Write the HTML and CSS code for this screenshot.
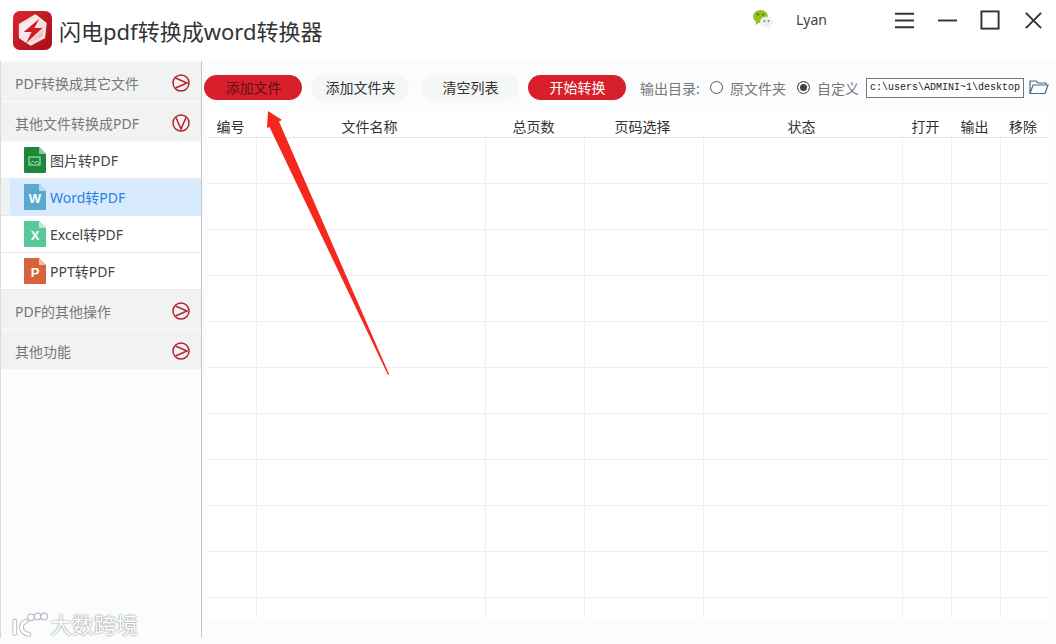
FILE: index.html
```html
<!DOCTYPE html>
<html lang="zh-CN">
<head>
<meta charset="utf-8">
<title>闪电pdf转换成word转换器</title>
<link rel="stylesheet" href="styles.css">
</head>
<body>
<div class="app">
  <header class="titlebar">
    <svg class="logo" viewBox="0 0 40 40">
      <defs>
        <linearGradient id="lg" x1="0" y1="0" x2="1" y2="1"><stop offset="0" stop-color="#dd2530"/><stop offset="1" stop-color="#a50f18"/></linearGradient>
        <linearGradient id="lw" x1="0" y1="0" x2="1" y2="1"><stop offset="0" stop-color="#fff"/><stop offset="0.6" stop-color="#f7dcdd"/><stop offset="1" stop-color="#e58f95"/></linearGradient>
      </defs>
      <rect width="40" height="40" rx="7" fill="url(#lg)"/>
      <path d="M23 5 L33 13 L31.500 27 L18 34 L7.500 27 L7.500 14 Z" fill="url(#lw)" stroke="#f6e4e4" stroke-width="3" stroke-linejoin="round"/>
      <path d="M27 8 L11 21.500 L19 21.500 L13.500 33 L30 17.500 L22 17.500 Z" fill="#cf1c27"/>
    </svg>
    <h1 class="app-title">闪电pdf转换成word转换器</h1>
    <svg class="wechat" viewBox="0 0 22 22">
      <ellipse cx="8.500" cy="8.500" rx="7.500" ry="6.500" fill="#8fc31f"/>
      <path d="M4 13 L3.500 17 L8 14 Z" fill="#8fc31f"/>
      <ellipse cx="14.500" cy="14" rx="6.500" ry="5.500" fill="#f1f1ec"/>
      <path d="M17 18 L18.500 21 L14.500 19 Z" fill="#f1f1ec"/>
      <circle cx="6" cy="6.500" r="1.100" fill="#476b12"/>
      <circle cx="11" cy="6.500" r="1.100" fill="#476b12"/>
      <circle cx="12.500" cy="13" r="0.900" fill="#777"/>
      <circle cx="16.500" cy="13" r="0.900" fill="#777"/>
    </svg>
    <span class="user">Lyan</span>
    <div class="win-controls">
      <svg class="win-icon" viewBox="0 0 22 18"><path d="M1 2H21M1 9H21M1 16H21" stroke="#333" stroke-width="2" fill="none"/></svg>
      <svg class="win-icon" viewBox="0 0 22 18"><path d="M1 9H21" stroke="#333" stroke-width="2" fill="none"/></svg>
      <svg class="win-icon" viewBox="0 0 22 22"><rect x="1.500" y="1.500" width="18" height="18" stroke="#333" stroke-width="2" fill="none"/></svg>
      <svg class="win-icon" viewBox="0 0 22 22"><path d="M3 3L19 19M19 3L3 19" stroke="#333" stroke-width="2" fill="none"/></svg>
    </div>
  </header>

  <div class="workspace">
    <aside class="sidebar">
      <div class="group">
        <span>PDF转换成其它文件</span>
        <svg class="chev" viewBox="0 0 18 18"><circle cx="9" cy="9" r="8" fill="none" stroke="#b5242c" stroke-width="1.500"/><path d="M3.500 4L15 9L3.500 14" fill="none" stroke="#b5242c" stroke-width="1.500"/></svg>
      </div>
      <div class="group">
        <span>其他文件转换成PDF</span>
        <svg class="chev" viewBox="0 0 18 18"><circle cx="9" cy="9" r="8" fill="none" stroke="#b5242c" stroke-width="1.500"/><path d="M4 3.500L9 15L14 3.500" fill="none" stroke="#b5242c" stroke-width="1.500"/></svg>
      </div>
      <div class="item">
        <svg class="file" viewBox="0 0 22 26"><path d="M1 0H15L22 7V25a1 1 0 0 1-1 1H1a1 1 0 0 1-1-1V1a1 1 0 0 1 1-1Z" fill="#1a8a3a"/><path d="M15 0L22 7H15Z" fill="#8cc79b"/><rect x="5" y="10" width="11" height="8" fill="none" stroke="#bfe3c8"/><path d="M6 17L9 14L11 16L13 14L15 17" fill="none" stroke="#bfe3c8" stroke-width="0.800"/></svg>
        <span>图片转PDF</span>
      </div>
      <div class="item selected">
        <svg class="file" viewBox="0 0 22 26"><path d="M1 0H15L22 7V25a1 1 0 0 1-1 1H1a1 1 0 0 1-1-1V1a1 1 0 0 1 1-1Z" fill="#5aa9cc"/><path d="M15 0L22 7H15Z" fill="#bcdcec"/><text x="11" y="19" class="file-letter">W</text></svg>
        <span>Word转PDF</span>
      </div>
      <div class="item">
        <svg class="file" viewBox="0 0 22 26"><path d="M1 0H15L22 7V25a1 1 0 0 1-1 1H1a1 1 0 0 1-1-1V1a1 1 0 0 1 1-1Z" fill="#58c89b"/><path d="M15 0L22 7H15Z" fill="#bde9d6"/><text x="11" y="19" class="file-letter">X</text></svg>
        <span>Excel转PDF</span>
      </div>
      <div class="item">
        <svg class="file" viewBox="0 0 22 26"><path d="M1 0H15L22 7V25a1 1 0 0 1-1 1H1a1 1 0 0 1-1-1V1a1 1 0 0 1 1-1Z" fill="#d9623a"/><path d="M15 0L22 7H15Z" fill="#f0c0ad"/><text x="11" y="19" class="file-letter">P</text></svg>
        <span>PPT转PDF</span>
      </div>
      <div class="group">
        <span>PDF的其他操作</span>
        <svg class="chev" viewBox="0 0 18 18"><circle cx="9" cy="9" r="8" fill="none" stroke="#b5242c" stroke-width="1.500"/><path d="M3.500 4L15 9L3.500 14" fill="none" stroke="#b5242c" stroke-width="1.500"/></svg>
      </div>
      <div class="group">
        <span>其他功能</span>
        <svg class="chev" viewBox="0 0 18 18"><circle cx="9" cy="9" r="8" fill="none" stroke="#b5242c" stroke-width="1.500"/><path d="M3.500 4L15 9L3.500 14" fill="none" stroke="#b5242c" stroke-width="1.500"/></svg>
      </div>
    </aside>

    <main class="content">
      <div class="toolbar">
        <button class="btn primary dark-text">添加文件</button>
        <button class="btn">添加文件夹</button>
        <button class="btn clear">清空列表</button>
        <button class="btn primary start">开始转换</button>
        <span class="out-label">输出目录:</span>
        <label class="radio"><i class="dot"></i>原文件夹</label>
        <label class="radio custom"><i class="dot on"></i>自定义</label>
        <div class="path">c:\users\ADMINI~1\desktop</div>
        <svg class="folder" viewBox="0 0 20 16"><path d="M1 14.500V2H7L9 4H17V6M1 14.500H16L19 6H4L1 14.500Z" fill="none" stroke="#4a6a80" stroke-width="1.200"/></svg>
      </div>
      <div class="table">
        <div class="row head">
          <div>编号</div><div>文件名称</div><div>总页数</div><div>页码选择</div><div>状态</div><div>打开</div><div>输出</div><div>移除</div>
        </div>
        <div class="row"><div></div><div></div><div></div><div></div><div></div><div></div><div></div><div></div></div>
        <div class="row"><div></div><div></div><div></div><div></div><div></div><div></div><div></div><div></div></div>
        <div class="row"><div></div><div></div><div></div><div></div><div></div><div></div><div></div><div></div></div>
        <div class="row"><div></div><div></div><div></div><div></div><div></div><div></div><div></div><div></div></div>
        <div class="row"><div></div><div></div><div></div><div></div><div></div><div></div><div></div><div></div></div>
        <div class="row"><div></div><div></div><div></div><div></div><div></div><div></div><div></div><div></div></div>
        <div class="row"><div></div><div></div><div></div><div></div><div></div><div></div><div></div><div></div></div>
        <div class="row"><div></div><div></div><div></div><div></div><div></div><div></div><div></div><div></div></div>
        <div class="row"><div></div><div></div><div></div><div></div><div></div><div></div><div></div><div></div></div>
        <div class="row"><div></div><div></div><div></div><div></div><div></div><div></div><div></div><div></div></div>
        <div class="row"><div></div><div></div><div></div><div></div><div></div><div></div><div></div><div></div></div>
      </div>
    </main>
  </div>

  <svg class="arrow" viewBox="0 0 130 270"><path d="M4 1 L18 10 L15 11.500 L125 264 L124 265 L5.500 17 L3 18 Z" fill="#f5281e"/></svg>

  <div class="watermark">
    <svg class="wm-logo" viewBox="0 0 40 26"><g fill="none" stroke="#b9bdc2" stroke-width="5" stroke-linecap="round"><path d="M5 10V23"/><path d="M17 10C10 13 10 22 20 24"/></g><g fill="none" stroke="#fff" stroke-width="3" stroke-linecap="round"><path d="M5 10V23"/><path d="M17 10C10 13 10 22 20 24"/></g><g fill="#fff" stroke="#b5b9be" stroke-width="1.200"><circle cx="22" cy="6" r="3.500"/><circle cx="29" cy="5" r="3.500"/><circle cx="36" cy="5" r="3.500"/></g></svg>
    <span>大数跨境</span>
  </div>
</div>
</body>
</html>
```

FILE: styles.css
```css
* { box-sizing: border-box; }
html, body { margin: 0; padding: 0; }
body {
  width: 1056px;
  height: 644px;
  overflow: hidden;
  background: #fafcfe;
  font-family: "Noto Sans", "Noto Sans CJK SC", sans-serif;
  color: #333;
}
.app { position: relative; width: 1056px; height: 644px; display: flex; flex-direction: column; }

.titlebar { height: 61px; flex: none; background: #fff; display: flex; align-items: center; padding-left: 13px; padding-right: 12px; }
.logo { width: 39px; height: 39px; flex: none; }
.app-title { margin: 2px 0 0 7px; font-size: 22px; font-weight: 400; color: #333; line-height: 39px; flex: 1; }
.wechat { width: 22px; height: 22px; margin-top: -23px; flex: none; }
.user { margin: -22px 0 0 22px; width: 98px; font-size: 14px; color: #444; }
.win-controls { display: flex; align-items: center; gap: 22px; margin-top: -21px; }
.win-icon { width: 21px; height: 21px; flex: none; }

.workspace { flex: none; height: 577px; display: flex; }
.sidebar { width: 202px; flex: none; border-left: 1px solid #d8dadc; border-right: 1px solid #c4c7ca; padding-top: 1px; display: flex; flex-direction: column; }
.group { height: 39px; margin-bottom: 1px; background: #f1f3f3; display: flex; align-items: center; justify-content: space-between; padding: 2px 11px 0 14px; font-size: 14px; color: #777; }
.chev { width: 18px; height: 18px; margin-top: 1px; }
.item { height: 37px; background: #fff; border-bottom: 1px solid #e8eaec; display: flex; align-items: center; padding-left: 23px; font-size: 14px; color: #444; }
.item .file { width: 22px; height: 26px; margin-right: 4px; flex: none; }
.item.selected { background: linear-gradient(to right, #f1f3f3 9px, #d8eafd 9px); color: #2a82e4; border-bottom-color: #d8eafd; }
.file-letter { font: 700 13px "Liberation Sans", sans-serif; fill: #fff; text-anchor: middle; }

.content { flex: 1; display: flex; flex-direction: column; padding: 0 7px 0 2px; min-width: 0; }
.toolbar { height: 52px; flex: none; display: flex; align-items: center; font-size: 14px; white-space: nowrap; }
.btn { width: 98px; height: 25px; padding: 0 0 0 1px; border: 0; border-radius: 13px; background: #f5f6f6; font: inherit; color: #333; margin-right: 9px; flex: none; }
.btn.primary { background: #d8202c; color: #fff; }
.btn.dark-text { color: #5c1015; }
.btn.clear { margin-left: 3px; }
.btn.start { margin-right: 14px; }
.out-label { color: #777; width: 70px; margin-top: 1px; flex: none; }
.radio { display: flex; align-items: center; color: #777; margin-right: 11px; margin-top: 1px; flex: none; }
.dot { width: 13px; height: 13px; border-radius: 50%; border: 1px solid #555; background: #fff; margin-right: 7px; display: block; flex: none; }
.dot.on { background: #444; box-shadow: inset 0 0 0 2px #fff; }
.radio.custom { margin-right: 7px; }
.path { width: 158px; height: 20px; flex: none; border: 1px solid #777; background: #fff; font: 10px/18px "Liberation Mono", monospace; color: #222; padding-left: 3px; white-space: nowrap; overflow: hidden; margin-top: 2px; }
.folder { width: 20px; height: 16px; margin-left: 5px; flex: none; }

.table { width: 841px; height: 505px; margin-left: 4px; background: #fff; overflow: hidden; flex: none; }
.row { display: grid; grid-template-columns: 49px 229px 99px 119px 199px 49px 49px 48px; height: 46px; border-bottom: 1px solid #eeeeee; }
.row > div { border-right: 1px solid #f0f0f0; }
.row > div:last-child { border-right: 0; }
.row.head { height: 25px; border-bottom: 1px solid #e6e6e6; font-size: 14px; color: #333; }
.row.head > div { border-right: 0; padding-right: 4px; text-align: center; line-height: 27px; }

.arrow { position: absolute; left: 264px; top: 110px; width: 130px; height: 270px; }

.watermark { position: absolute; left: 10px; top: 610px; display: flex; align-items: center; gap: 2px; font-size: 22px; line-height: 28px; color: #fff; text-shadow: 0 0 2px #8f9499, 0 0 1px #8f9499; }
.wm-logo { width: 38px; height: 26px; flex: none; }
```
